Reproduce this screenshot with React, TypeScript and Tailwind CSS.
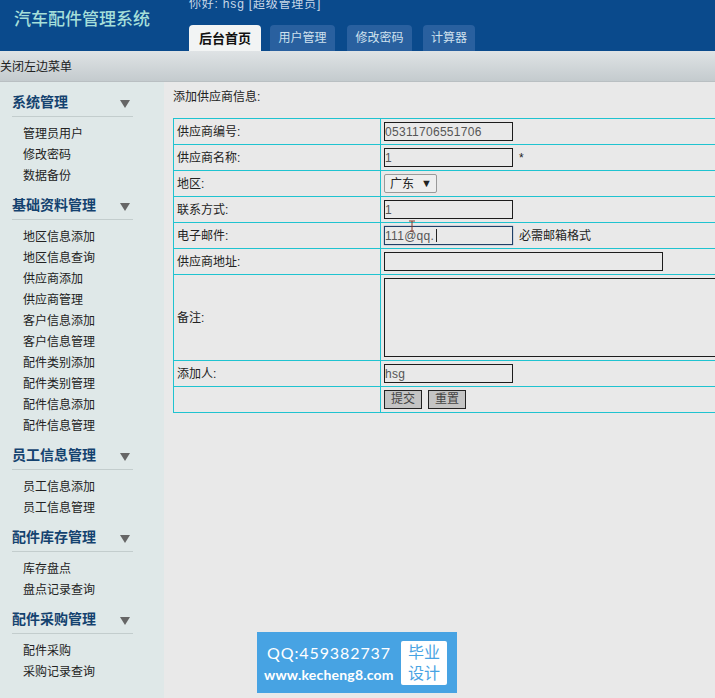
const menu = [
  { title: "系统管理", items: ["管理员用户", "修改密码", "数据备份"] },
  {
    title: "基础资料管理",
    items: [
      "地区信息添加",
      "地区信息查询",
      "供应商添加",
      "供应商管理",
      "客户信息添加",
      "客户信息管理",
      "配件类别添加",
      "配件类别管理",
      "配件信息添加",
      "配件信息管理",
    ],
  },
  { title: "员工信息管理", items: ["员工信息添加", "员工信息管理"] },
  { title: "配件库存管理", items: ["库存盘点", "盘点记录查询"] },
  { title: "配件采购管理", items: ["配件采购", "采购记录查询"] },
]

const tabs = [
  { name: "用户管理", cls: "w-[65px] mr-[12px]" },
  { name: "修改密码", cls: "w-[65px] mr-[11px]" },
  { name: "计算器", cls: "w-[52px]" },
]

function Field({ value, width = "w-[129px]" }: { value?: string; width?: string }) {
  return (
    <input
      readOnly
      value={value ?? ""}
      className={`${width} h-[19px] border border-[#1c1c1c] bg-[#e9e9e9] px-0 text-[12px] text-[#555] tracking-[0.3px] outline-none block`}
    />
  )
}

function Row({ label, h = "h-[26px]", children }: { label?: string; h?: string; children: React.ReactNode }) {
  return (
    <tr className={h}>
      <td className="w-[207px] border border-[#1fc3d0] px-[3px] py-0 text-[12px] text-[#222]">{label}</td>
      <td className="border border-[#1fc3d0] px-[3px] py-0 text-[12px] text-[#222]">{children}</td>
    </tr>
  )
}

export default function App() {
  return (
    <div className="relative w-[715px] h-[698px] overflow-hidden bg-[#e9e9e9] font-['Liberation_Sans','Noto_Sans_CJK_SC',sans-serif]">
      <header className="h-[51px] bg-[#0a4a8c] flex">
        <h1 className="w-[189px] pl-[14px] pt-[9px] text-[17px] leading-[22px] font-medium text-[#a5dfd9]">汽车配件管理系统</h1>
        <div className="flex flex-col">
          <p className="-mt-[3px] h-[28px] text-[12px] leading-[14px] text-[#c8d8e8] tracking-[0.8px]">你好: hsg [超级管理员]</p>
          <nav className="flex">
            <a className="w-[72px] h-[26px] mr-[9px] rounded-t-[4px] bg-[#f2f4f4] text-center text-[13px] leading-[27px] font-bold text-[#111]">后台首页</a>
            {tabs.map((t) => (
              <a
                key={t.name}
                className={`${t.cls} h-[26px] rounded-t-[4px] bg-[#29609f] text-center text-[12px] leading-[27px] text-[#cfe0ee]`}
              >
                {t.name}
              </a>
            ))}
          </nav>
        </div>
      </header>

      <div className="h-[31px] bg-gradient-to-b from-[#dfe3e5] to-[#c4cbce] border-b border-[#b9bfc2] text-[12px] leading-[33px] text-[#222]">关闭左边菜单</div>

      <div className="flex h-[616px]">
        <aside className="w-[164px] shrink-0 bg-[#dfe8e8] pt-[7px]">
          {menu.map((s) => (
            <section key={s.title} className="pb-[5px]">
              <div className="h-[28px] ml-[12px] w-[121px] flex items-center justify-between border-b border-[#c3cdcd] pb-px">
                <h2 className="text-[14px] font-bold text-[#14426f] leading-[20px]">{s.title}</h2>
                <svg width="10" height="8" viewBox="0 0 10 8" className="mr-[3px] mt-[4px]">
                  <path d="M0 0h10L5 8z" fill="#666" />
                </svg>
              </div>
              <ul className="pt-[7px] pl-[23px] text-[12px] leading-[21px] text-[#222]">
                {s.items.map((i) => (
                  <li key={i}>{i}</li>
                ))}
              </ul>
            </section>
          ))}
        </aside>

        <main className="flex-1 min-w-0 pl-[9px] overflow-hidden">
          <p className="mt-[6px] h-[30px] text-[12px] leading-[18px] text-[#222]">添加供应商信息:</p>
          <table className="w-[580px] border-collapse">
            <tbody>
              <Row label="供应商编号:">
                <Field value="05311706551706" />
              </Row>
              <Row label="供应商名称:">
                <div className="flex items-center gap-[6px]">
                  <Field value="1" />
                  <span>*</span>
                </div>
              </Row>
              <Row label="地区:">
                <div className="w-[53px] h-[19px] border border-[#999] rounded-[2px] bg-[#eee] flex items-center justify-between pl-[5px] pr-[4px] text-[12px]">
                  <span>广东</span>
                  <span className="text-[11px]">▼</span>
                </div>
              </Row>
              <Row label="联系方式:">
                <Field value="1" />
              </Row>
              <Row label="电子邮件:">
                <div className="flex items-center gap-[6px]">
                  <div className="relative">
                    <Field value="111@qq." width="w-[129px] !border-[#1f3f66] shadow-[0_0_1px_#4a78a8]" />
                    <span className="absolute left-[52px] top-[3px] w-px h-[13px] bg-[#222]" />
                    <svg width="8" height="24" viewBox="0 0 8 24" className="absolute left-[24px] -top-[6px]">
                      <path d="M1 1h6M4 1v10M2 11h4" stroke="#8a3a2a" strokeWidth="1" fill="none" />
                    </svg>
                  </div>
                  <span>必需邮箱格式</span>
                </div>
              </Row>
              <Row label="供应商地址:">
                <Field width="w-[279px]" />
              </Row>
              <Row label="备注:" h="h-[86px]">
                <div className="w-[340px] h-[79px] border border-[#1c1c1c]" />
              </Row>
              <Row label="添加人:">
                <Field value="hsg" />
              </Row>
              <Row>
                <div className="flex gap-[6px]">
                  <button className="w-[38px] h-[19px] border border-[#222] bg-[#c4c4c4] text-[12px] leading-[17px] text-[#444]">提交</button>
                  <button className="w-[38px] h-[19px] border border-[#222] bg-[#c4c4c4] text-[12px] leading-[17px] text-[#444]">重置</button>
                </div>
              </Row>
            </tbody>
          </table>
        </main>
      </div>

      <div className="absolute left-[257px] top-[632px] w-[200px] h-[61px] bg-[#47a3e3] flex items-center pl-[7px] gap-[6px]">
        <div className="w-[131px] text-white whitespace-nowrap">
          <p className="pl-[3px] text-[16px] leading-[22px] tracking-[0.9px] font-['Lato',sans-serif]">QQ:459382737</p>
          <p className="mt-[3px] text-[14px] leading-[16px] tracking-[0.2px] font-bold font-['Lato',sans-serif]">www.kecheng8.com</p>
        </div>
        <div className="w-[46px] h-[44px] bg-white rounded-[2px] text-center text-[16px] leading-[21px] text-[#47a3e3] py-px">
          <div>毕业</div>
          <div>设计</div>
        </div>
      </div>
    </div>
  )
}
